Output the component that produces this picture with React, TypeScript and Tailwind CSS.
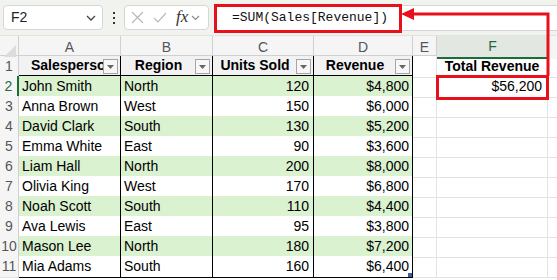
import React from "react";

const rows = [
  { name: "John Smith", region: "North", units: 120, revenue: "$4,800" },
  { name: "Anna Brown", region: "West", units: 150, revenue: "$6,000" },
  { name: "David Clark", region: "South", units: 130, revenue: "$5,200" },
  { name: "Emma White", region: "East", units: 90, revenue: "$3,600" },
  { name: "Liam Hall", region: "North", units: 200, revenue: "$8,000" },
  { name: "Olivia King", region: "West", units: 170, revenue: "$6,800" },
  { name: "Noah Scott", region: "South", units: 110, revenue: "$4,400" },
  { name: "Ava Lewis", region: "East", units: 95, revenue: "$3,800" },
  { name: "Mason Lee", region: "North", units: 180, revenue: "$7,200" },
  { name: "Mia Adams", region: "South", units: 160, revenue: "$6,400" },
];

const cols = "grid grid-cols-[19px_102px_92px_101px_99px_24px_111px_9px]";

const FilterBtn = () => (
  <span className="absolute right-[2px] top-[3px] w-[15px] h-[15px] border border-[#a6a6a6] bg-[#f7f7f7] flex items-center justify-center">
    <svg width="7" height="4" viewBox="0 0 7 4">
      <path d="M0 0h7L3.5 4z" fill="#666" />
    </svg>
  </span>
);

const HeadCell = ({ label }: { label: string }) => (
  <div className="relative h-[20px] bg-[#f2f2f2] border-b border-r border-black flex items-center justify-center pr-[16px] font-bold text-[14px] text-black overflow-hidden whitespace-nowrap">
    <span className={label === "Salesperson" ? "ml-[22px]" : ""}>{label}</span>
    <FilterBtn />
  </div>
);

export default function App() {
  return (
    <div className="relative w-[557px] h-[280px] overflow-hidden bg-white font-['Liberation_Sans',Arial,sans-serif] text-black">
      {/* toolbar */}
      <div className="h-[36px] bg-[#f1f4ee] flex items-start pt-[5px] border-b border-[#e1e4de]">
        <div className="ml-[3px] w-[100px] h-[25px] rounded-[4px] border border-[#d6d6d6] bg-white flex items-center justify-between pl-[7px] pr-[6px]">
          <span className="text-[14px] text-[#222]">F2</span>
          <svg width="10" height="6" viewBox="0 0 10 6">
            <path d="M1 1l4 4 4-4" stroke="#444" strokeWidth="1.3" fill="none" />
          </svg>
        </div>
        <div className="w-[21px] h-[25px] flex flex-col items-center justify-center gap-[3px]">
          <span className="w-[2px] h-[2px] bg-[#333]" />
          <span className="w-[2px] h-[2px] bg-[#333]" />
          <span className="w-[2px] h-[2px] bg-[#333]" />
        </div>
        <div className="w-[85px] h-[25px] rounded-[4px] border border-[#d6d6d6] bg-white flex items-center pl-[6px] gap-[9px]">
          <svg width="13" height="13" viewBox="0 0 13 13">
            <path d="M1 1l11 11M12 1L1 12" stroke="#b9b9b9" strokeWidth="1.2" />
          </svg>
          <svg width="14" height="11" viewBox="0 0 14 11">
            <path d="M1 6l4 4 8-9" stroke="#b9b9b9" strokeWidth="1.2" fill="none" />
          </svg>
          <span className="font-['Liberation_Serif',serif] italic text-[17px] text-[#333] leading-none -mt-[2px]">
            fx
          </span>
          <svg width="9" height="6" viewBox="0 0 9 6" className="-ml-[6px]">
            <path d="M1 1l3.5 3.5L8 1" stroke="#888" strokeWidth="1.1" fill="none" />
          </svg>
        </div>
        <div className="ml-[6px] flex-1 h-[26px] bg-white border-l border-t border-b border-[#d6d6d6] rounded-l-[4px] flex items-center pl-[16px]">
          <span className="font-['Liberation_Mono',monospace] text-[13px] text-[#111]">
            =SUM(Sales[Revenue])
          </span>
        </div>
      </div>

      {/* column headers */}
      <div className={`${cols} h-[20px] bg-[#f5f5f5] text-[14px] text-[#555] border-b border-[#d0d0d0]`}>
        <div className="relative border-r border-[#d0d0d0]">
          <svg width="12" height="12" viewBox="0 0 12 12" className="absolute right-[2px] bottom-[2px]">
            <path d="M12 0V12H0z" fill="#dcdcdc" />
          </svg>
        </div>
        {["A", "B", "C", "D", "E"].map((c) => (
          <div key={c} className="flex items-center justify-center border-r border-[#d0d0d0]">
            {c}
          </div>
        ))}
        <div className="flex items-center justify-center bg-[#e3e7e1] text-[#1e6b3a] border-b-2 border-[#1e6b3a]">
          F
        </div>
        <div className="bg-[#f5f5f5] border-l border-[#d0d0d0]" />
      </div>

      {/* row 1 */}
      <div className={`${cols} h-[20px]`}>
        <div className="bg-[#f5f5f5] border-r border-[#d0d0d0] border-b border-b-[#e3e3e3] text-[14px] text-[#555] flex items-center justify-center">
          1
        </div>
        <HeadCell label="Salesperson" />
        <HeadCell label="Region" />
        <HeadCell label="Units Sold" />
        <HeadCell label="Revenue" />
        <div className="border-b border-r border-[#e3e3e3]" />
        <div className="border-b border-r border-[#e3e3e3] flex items-center justify-center font-bold text-[14px] whitespace-nowrap">
          Total Revenue
        </div>
        <div className="border-b border-[#e3e3e3]" />
      </div>

      {/* data rows */}
      {rows.map((r, i) => {
        const green = i % 2 === 0;
        const bg = green ? "bg-[#daf2d0]" : "bg-white";
        const sel = i === 0;
        return (
          <div key={r.name} className={`${cols} h-[20px] text-[14px]`}>
            <div
              className={`bg-[#f5f5f5] border-b border-b-[#e3e3e3] flex items-center justify-center ${
                sel ? "text-[#1e6b3a] border-r-2 border-r-[#1e6b3a]" : "text-[#555] border-r border-r-[#d0d0d0]"
              }`}
            >
              {i + 2}
            </div>
            <div className={`${bg} border-r border-b border-black flex items-center pl-[3px] whitespace-nowrap`}>
              {r.name}
            </div>
            <div className={`${bg} border-r border-b border-black flex items-center pl-[3px]`}>
              {r.region}
            </div>
            <div className={`${bg} border-r border-b border-black flex items-center justify-end pr-[4px]`}>
              {r.units}
            </div>
            <div className={`relative ${bg} border-r border-b border-black flex items-center justify-end pr-[3px]`}>
              {r.revenue}
              {i === rows.length - 1 && (
                <span className="absolute right-0 bottom-0 w-[4px] h-[4px] bg-[#3c5ba8]" />
              )}
            </div>
            <div className="border-r border-b border-[#e3e3e3]" />
            <div className="border-r border-b border-[#e3e3e3] flex items-center justify-end pr-[5px]">
              {sel ? "$56,200" : ""}
            </div>
            <div className="border-b border-[#e3e3e3]" />
          </div>
        );
      })}

      {/* red callouts */}
      <div className="absolute left-[214px] top-[4px] w-[188px] h-[29px] border-[3px] border-[#e8101a]" />
      <div className="absolute left-[436px] top-[75px] w-[113px] h-[25px] border-[3px] border-[#e8101a]" />
      <svg className="absolute left-0 top-0" width="557" height="280">
        <path d="M548 76V14H412" stroke="#e8101a" strokeWidth="3" fill="none" />
        <path d="M401 14l13-6v12z" fill="#e8101a" />
      </svg>
    </div>
  );
}
